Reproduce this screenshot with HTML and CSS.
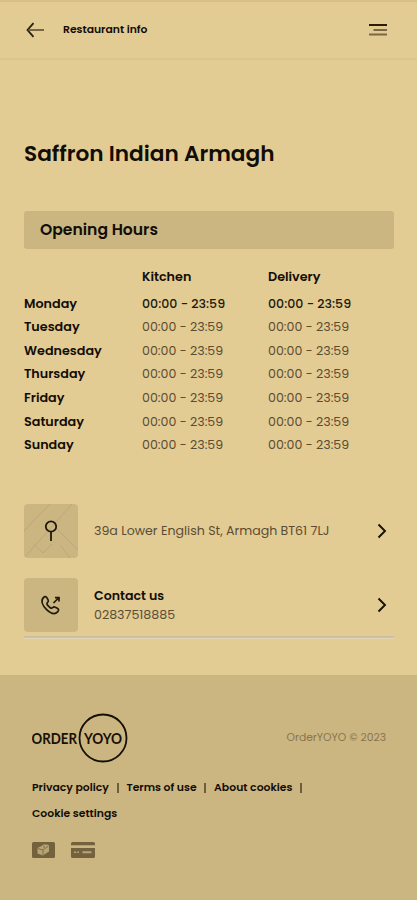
FILE: index.html
```html
<!DOCTYPE html>
<html lang="en">
<head>
<meta charset="utf-8">
<title>Restaurant info</title>
<link rel="stylesheet" href="styles.css">
</head>
<body>
<header class="topbar">
  <svg class="back" width="20" height="16" viewBox="0 0 20 16"><path d="M8.500 1.200 2.500 8l6 6.800" /><path class="shaft" d="M3 8h16" /></svg>
  <span class="topbar-title">Restaurant info</span>
  <svg class="menu" width="18" height="14" viewBox="0 0 18 14"><path d="M0 2h18" /><path class="soft" d="M4.500 7H18M0 11.500h18" /></svg>
</header>
<main>
  <h1>Saffron Indian Armagh</h1>
  <h2>Opening Hours</h2>
  <div class="hours">
    <div class="row head"><span></span><b>Kitchen</b><b>Delivery</b></div>
    <div class="row today"><b>Monday</b><span>00:00 - 23:59</span><span>00:00 - 23:59</span></div>
    <div class="row"><b>Tuesday</b><span>00:00 - 23:59</span><span>00:00 - 23:59</span></div>
    <div class="row"><b>Wednesday</b><span>00:00 - 23:59</span><span>00:00 - 23:59</span></div>
    <div class="row"><b>Thursday</b><span>00:00 - 23:59</span><span>00:00 - 23:59</span></div>
    <div class="row"><b>Friday</b><span>00:00 - 23:59</span><span>00:00 - 23:59</span></div>
    <div class="row"><b>Saturday</b><span>00:00 - 23:59</span><span>00:00 - 23:59</span></div>
    <div class="row"><b>Sunday</b><span>00:00 - 23:59</span><span>00:00 - 23:59</span></div>
  </div>
  <section class="contact">
    <div class="item">
      <svg class="tile" width="54" height="54" viewBox="0 0 54 54">
        <path class="road" d="M0 27 26 0M0 54 48 0M32 24 54 46M10 40l9 9 9-9M36 41l10 13" />
        <circle class="ink" cx="27" cy="22.500" r="5.200" /><path class="ink" d="M27 28v9" />
      </svg>
      <span class="address">39a Lower English St, Armagh BT61 7LJ</span>
      <svg class="chevron" width="10" height="16" viewBox="0 0 10 16"><path d="m1.500 1.500 6.500 6.500-6.500 6.500" /></svg>
    </div>
    <div class="item">
      <svg class="tile" width="54" height="54" viewBox="0 0 54 54">
        <path class="ink thin" d="M19.400 19.600c1.400-1.500 2.700-1.200 3.600.3l1.100 2c.7 1.300.2 2-.7 2.800-.9.8-.5 1.900 1.300 3.700 1.800 1.800 3 2.300 3.800 1.400.8-.9 1.600-1.300 2.800-.6l2 1.100c1.600.9 1.700 2.200.3 3.600-2.800 2.800-7.300 1.200-11.200-2.600-4.100-4.100-5.800-8.800-3-11.700ZM29.500 25l5-5M31 19.600h4v4" />
      </svg>
      <div class="lines"><b>Contact us</b><span class="phone">02837518885</span></div>
      <svg class="chevron" width="10" height="16" viewBox="0 0 10 16"><path d="m1.500 1.500 6.500 6.500-6.500 6.500" /></svg>
    </div>
  </section>
</main>
<footer>
  <div class="brand">
    <svg width="98" height="50" viewBox="0 0 98 50">
      <circle class="ring" cx="71" cy="25" r="23.500" />
      <text x="-.5" y="30.600" textLength="45.500" lengthAdjust="spacingAndGlyphs">ORDER</text>
      <text x="52" y="30.600" textLength="38" lengthAdjust="spacingAndGlyphs">YOYO</text>
    </svg>
    <span class="copyright">OrderYOYO © 2023</span>
  </div>
  <nav>
    <a>Privacy policy</a><i></i><a>Terms of use</a><i></i><a>About cookies</a><i></i>
    <a>Cookie settings</a>
  </nav>
  <div class="payments">
    <svg width="23" height="16" viewBox="0 0 23 16"><rect class="card" width="23" height="16" rx="1.500" /><path class="light" d="M5.500 6 10 3.800l2-1.500L17 3v6.500l-4 2.500-2 1.500-5.500-2z" /><path class="cut" d="m6 6.500 5 1.500 5.500-4M11 8v5M12 3.500v2.500" /></svg>
    <svg width="24" height="16" viewBox="0 0 24 16"><path class="card" d="M1.500 0h21Q24 0 24 1.500V3.300H0V1.500Q0 0 1.500 0ZM0 6h24v8.500q0 1.500-1.500 1.500h-21Q0 16 0 14.500Z" /><path class="light" d="M3 9.500h2.200v1.600H3zm3.200 0H8v1.600H6.200zM11.500 9.300h9v2h-9z" /></svg>
  </div>
</footer>
</body>
</html>
```
FILE: styles.css
```css
* { box-sizing: border-box; }
body {
  margin: 0;
  height: 900px;
  display: flex;
  flex-direction: column;
  background: #e3cb94;
  color: #120d06;
  font: 12.6px/20px Poppins, Inter, sans-serif;
}
b { font-weight: 600; }
svg { display: block; flex: none; fill: none; }
.topbar {
  height: 60px;
  display: flex;
  align-items: center;
  padding: 0 30px 0 25px;
  border-top: 2px solid #d8bf87;
  border-bottom: 2px solid #dcc48e;
}
.back { stroke: #252012; stroke-width: 1.8; }
.back .shaft { stroke: #5c4e32; stroke-width: 1.6; }
.topbar-title { margin-left: 18px; font-size: 10.8px; font-weight: 600; }
.menu { margin-left: auto; stroke: #2c1b08; stroke-width: 2; }
.menu .soft { stroke: #796842; }
main { height: 615px; padding: 78px 23px 0 24px; }
h1 { margin: 0; font-size: 21.650px; line-height: 32px; font-weight: 600; }
h2 {
  margin: 41px 0 0;
  height: 38px;
  padding-left: 16px;
  border-radius: 3px;
  background: #cbb580;
  font-size: 15.600px;
  line-height: 37px;
  font-weight: 600;
}
.hours { padding-top: 15.500px; }
.row {
  display: grid;
  grid-template-columns: 118px 126px 1fr;
  height: 23.670px;
  line-height: 23.670px;
  color: #5b4d32;
}
.row b { color: #120d06; font-size: 12.750px; }
.row.head { height: 27px; }
.row.today span { font-weight: 500; color: #21190c; }
.contact {
  margin-top: 46.500px;
  padding-bottom: 4px;
  border-bottom: 2px solid #c9c0a3;
  box-shadow: 0 1px #e4d7b4;
}
.item { display: flex; align-items: center; height: 54px; }
.item + .item { margin-top: 20px; }
.tile { margin-right: 16px; border-radius: 4px; background: #cbb580; }
.road { stroke: #bda779; stroke-width: 1; }
.ink { stroke: #21190c; stroke-width: 1.8; }
.thin { stroke-width: 1.7; }
.address, .phone { color: #5b4d32; }
.lines { display: flex; flex-direction: column; padding-top: 1px; line-height: 19px; }
.chevron { margin-left: auto; margin-right: 7px; stroke: #171008; stroke-width: 1.9; }
footer { flex: 1; background: #cbb580; padding: 38px 31px 0 32px; }
.brand { display: flex; align-items: center; justify-content: space-between; }
.brand text { fill: #171008; font: 700 15.500px Lato, sans-serif; }
.ring { stroke: #171008; stroke-width: 1.8; }
.copyright { font-size: 10.750px; color: #887550; }
nav { display: flex; flex-wrap: wrap; margin-top: 12px; font-size: 10.850px; line-height: 26px; font-weight: 600; }
nav a { white-space: nowrap; }
nav i { width: 2px; height: 10px; margin: 8px 7.750px 0; background: #6d5e3c; }
.payments { display: flex; gap: 16px; margin-top: 15px; }
.card { fill: #74623f; }
.light { fill: #b7a574; }
.cut { stroke: #74623f; stroke-width: .8; }
```
